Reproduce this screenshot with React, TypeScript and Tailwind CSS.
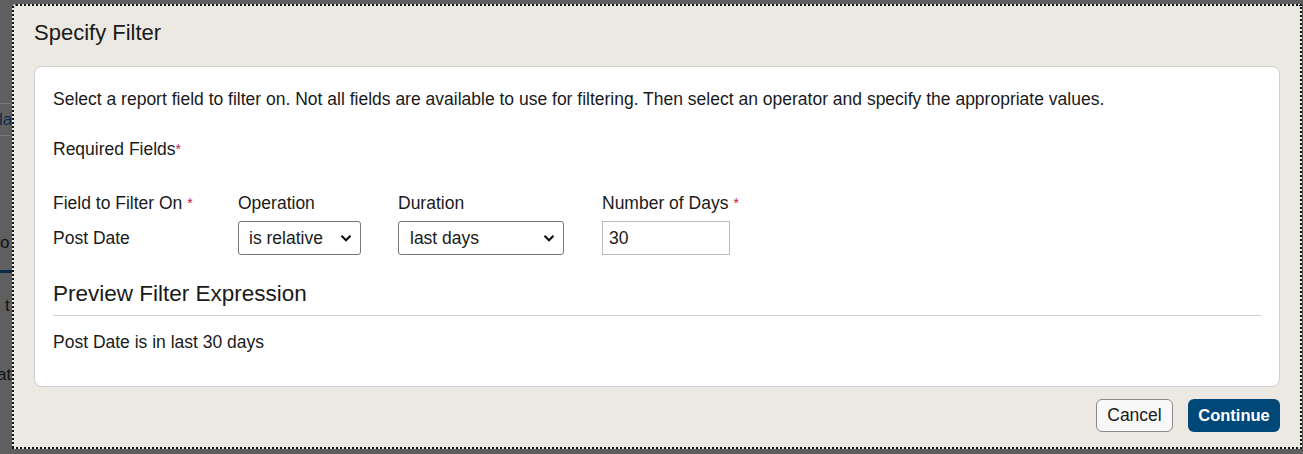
import React from "react";

function Req() {
  return <span className="text-[#c8174a] text-[14px] align-top ml-[5px]">*</span>;
}

function Chevron() {
  return (
    <svg width="12" height="8" viewBox="0 0 12 8">
      <path d="M1.5 1.8 L6 6.2 L10.5 1.8" fill="none" stroke="#111" strokeWidth="2.2" />
    </svg>
  );
}

export default function App() {
  return (
    <div
      className="w-[1303px] h-[454px] bg-[#5f5f5f] flex overflow-hidden"
      style={{ fontFamily: '"Liberation Sans", Arial, sans-serif' }}
    >
      {/* page behind the dialog */}
      <div className="w-[12px] shrink-0 overflow-hidden text-[17px] text-[#111] whitespace-nowrap">
        <div className="h-[103px]" />
        <div className="border-t border-b border-[#777] h-[33px] flex items-center -ml-[1px] text-[#0f2c4a]">la</div>
        <div className="h-[94px]" />
        <div className="ml-[0px]">o</div>
        <div className="h-[14px]" />
        <div className="h-[3px] bg-[#0b2a45]" />
        <div className="h-[20px]" />
        <div className="pl-[5px]">t</div>
        <div className="h-[44px]" />
        <div className="-ml-[3px]">at</div>
      </div>

      {/* dialog */}
      <div className="mt-[4px] w-[1290px] h-[445px] border-2 border-dotted border-[#111] rounded-tl-[4px] bg-[#ece9e3] flex flex-col">
        <div className="h-[60px] pl-[20px] pt-[15px] text-[22px] text-[#1a1a1a] leading-[24px]">Specify Filter</div>
        <div className="mx-[20px] h-[321px] bg-white border border-[#cfcfcf] rounded-[8px] px-[18px] pt-[22px] text-[17.5px] text-[#1a1a1a]">
          <p className="leading-[20px]">
            Select a report field to filter on. Not all fields are available to use for filtering. Then select an operator and specify the appropriate values.
          </p>
          <p className="leading-[20px] mt-[30px]">
            Required Fields<span className="text-[#c8174a] text-[14px] align-top">*</span>
          </p>
          <div className="flex mt-[34px]">
            <div className="w-[185px] flex flex-col">
              <div className="leading-[20px]">Field to Filter On<Req /></div>
              <div className="h-[34px] mt-[8px] flex items-center">Post Date</div>
            </div>
            <div className="w-[160px] flex flex-col">
              <div className="leading-[20px]">Operation</div>
              <div className="mt-[8px] w-[123px] h-[34px] border border-[#767676] rounded-[3px] flex items-center justify-between pl-[10px] pr-[8px]">
                <span>is relative</span>
                <Chevron />
              </div>
            </div>
            <div className="w-[204px] flex flex-col">
              <div className="leading-[20px]">Duration</div>
              <div className="mt-[8px] w-[166px] h-[34px] border border-[#767676] rounded-[3px] flex items-center justify-between pl-[11px] pr-[8px]">
                <span>last days</span>
                <Chevron />
              </div>
            </div>
            <div className="flex flex-col">
              <div className="leading-[20px]">Number of Days<Req /></div>
              <div className="mt-[8px] w-[128px] h-[34px] border border-[#bbbbbb] flex items-center pl-[6px]">30</div>
            </div>
          </div>
          <div className="mt-[27px] text-[22.5px] leading-[24px] pb-[9px] border-b border-[#cfcfcf]">Preview Filter Expression</div>
          <div className="mt-[16px] leading-[20px]">Post Date is in last 30 days</div>
        </div>
        <div className="flex justify-end gap-[15px] mr-[20px] mt-[12px]">
          <button className="h-[33px] w-[77px] rounded-[6px] border border-[#8a8a8a] bg-[#f8f8f8] text-[17.5px] text-[#1a1a1a]">Cancel</button>
          <button className="h-[33px] w-[92px] rounded-[6px] bg-[#004877] text-white text-[16.5px] font-bold">Continue</button>
        </div>
      </div>
    </div>
  );
}
